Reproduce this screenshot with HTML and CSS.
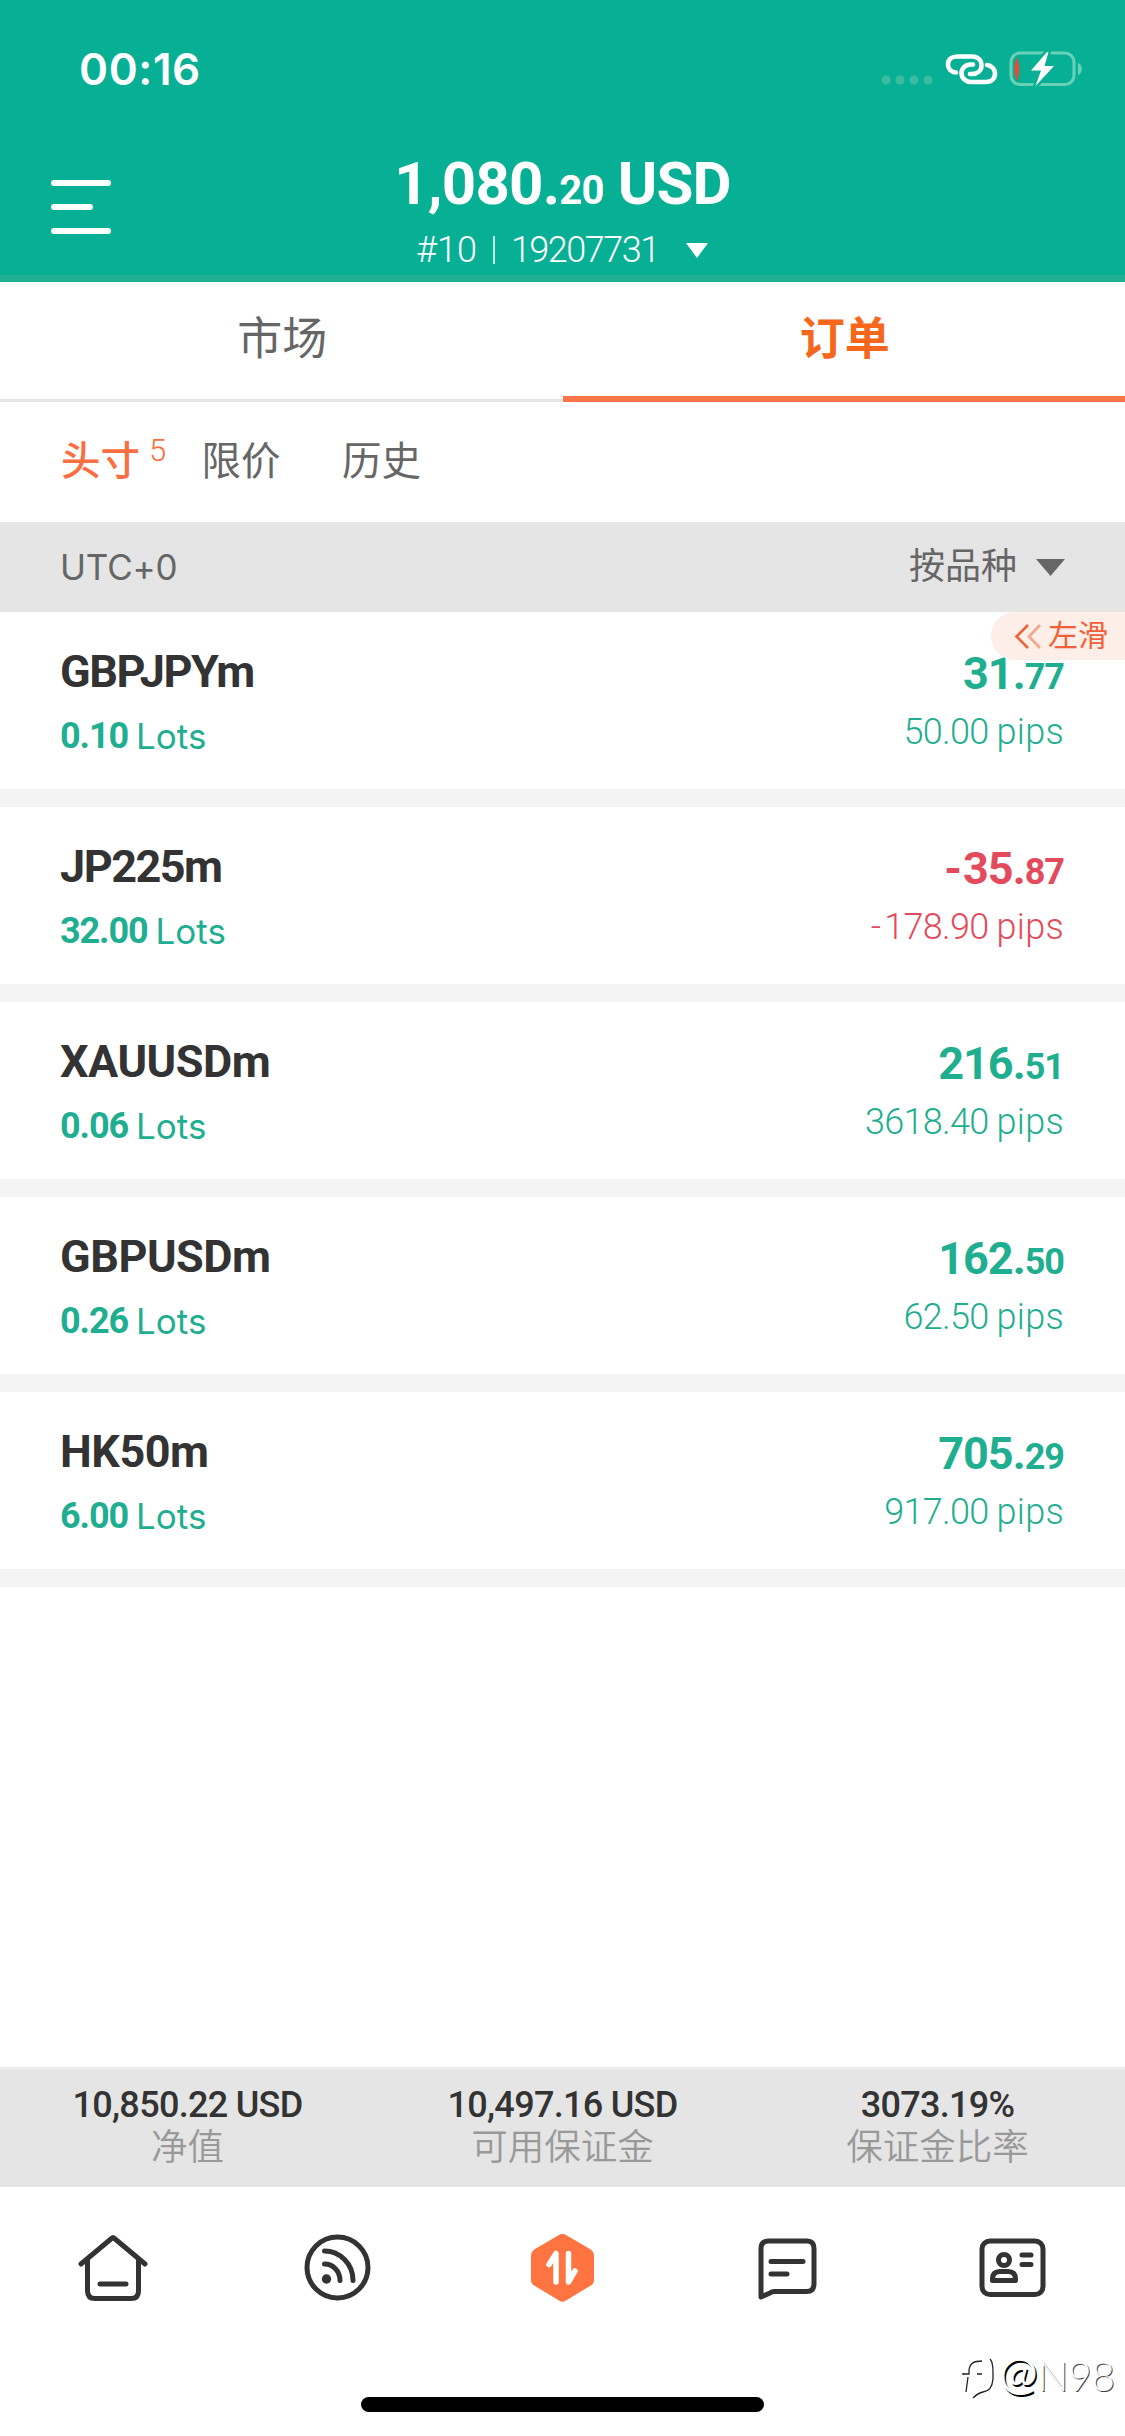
FILE: index.html
```html
<!DOCTYPE html>
<html lang="zh-CN">
<head>
<meta charset="utf-8">
<title>订单</title>
<link rel="stylesheet" href="styles.css">
</head>
<body>
<header class="header">
  <div class="status">
    <span class="time">00:16</span>
    <svg class="status-icons" width="204" height="40" viewBox="0 0 204 40">
      <g fill="#3cbb9f"><circle cx="6" cy="26" r="4.6"/><circle cx="20" cy="26" r="4.6"/><circle cx="34" cy="26" r="4.6"/><circle cx="48" cy="26" r="4.6"/></g>
      <g fill="none" stroke="#fff" stroke-width="4.6" stroke-linecap="round">
        <path d="M76 18.500C71 18 68 14.500 68 10.500C68 5.500 72 2.500 77 2.500H92C98 2.500 101.500 6.500 101.500 11.500C101.500 17 97 20 92 20H90"/>
        <path d="M93 10.500H91C85 10.500 81.500 14.500 81.500 19C81.500 24.500 86 28 91 28H106C111.500 28 115 24.500 115 19.500C115 15 111.500 11.500 107 11"/>
      </g>
      <rect x="131" y="-1" width="63" height="31.500" rx="9" fill="none" stroke="#68d1b8" stroke-width="3"/>
      <path d="M198 9C203 10 203 20 198 21Z" fill="#68d1b8"/>
      <path d="M137 5Q133 15 137 25Q140 15 137 5Z" fill="#e64b35" stroke="#e64b35" stroke-width="1.500"/>
      <path d="M167-2L151 16.500H161L155.500 32L174 12H164.500L168.500-2Z" fill="#fff" stroke="#07b094" stroke-width="5" paint-order="stroke" stroke-linejoin="round"/>
    </svg>
  </div>
  <div class="account">
    <svg class="menu" width="60" height="54" viewBox="0 0 60 54" stroke="#fff" stroke-width="6" stroke-linecap="round"><path d="M3 3H57M3 27H39M3 51H57"/></svg>
    <div class="balance">1,080.<small>20</small> USD</div>
    <div class="account-id"><span>#10</span><i class="divider"></i><span class="number">19207731</span><svg width="22" height="15" viewBox="0 0 22 15"><path d="M0 0H22L11 15Z" fill="#fff"/></svg></div>
  </div>
</header>
<nav class="tabs">
  <div class="tab">市场</div>
  <div class="tab tab-active">订单</div>
</nav>
<nav class="subtabs">
  <span class="subtab subtab-active">头寸<sup>5</sup></span>
  <span class="subtab">限价</span>
  <span class="subtab">历史</span>
</nav>
<div class="sortbar">
  <span class="utc">UTC+0</span>
  <span class="sort">按品种<svg width="29" height="17" viewBox="0 0 29 17"><path d="M0 0H29L14.500 17Z" fill="#666"/></svg></span>
</div>
<main class="orders">
  <section class="order">
    <div class="left"><div class="symbol tight">GBPJPYm</div><div class="lots"><b>0.10</b><span>Lots</span></div></div>
    <div class="right"><div class="profit">31.<small>77</small></div><div class="pips">50.00 <span>pips</span></div></div>
    <div class="swipe"><svg width="27" height="25" viewBox="0 0 27 25" fill="none" stroke-width="2.600"><path d="M26 1L15 12.500L26 24" stroke="#f7a58c"/><path d="M14 1L2.500 12.500L14 24" stroke="#f2603a"/></svg>左滑</div>
  </section>
  <section class="order loss">
    <div class="left"><div class="symbol tight">JP225m</div><div class="lots"><b>32.00</b><span>Lots</span></div></div>
    <div class="right"><div class="profit"><span class="minus">-</span>35.<small>87</small></div><div class="pips"><span class="minus">-</span>178.90 <span>pips</span></div></div>
  </section>
  <section class="order">
    <div class="left"><div class="symbol">XAUUSDm</div><div class="lots"><b>0.06</b><span>Lots</span></div></div>
    <div class="right"><div class="profit">216.<small>51</small></div><div class="pips">3618.40 <span>pips</span></div></div>
  </section>
  <section class="order">
    <div class="left"><div class="symbol">GBPUSDm</div><div class="lots"><b>0.26</b><span>Lots</span></div></div>
    <div class="right"><div class="profit">162.<small>50</small></div><div class="pips">62.50 <span>pips</span></div></div>
  </section>
  <section class="order">
    <div class="left"><div class="symbol">HK50m</div><div class="lots"><b>6.00</b><span>Lots</span></div></div>
    <div class="right"><div class="profit">705.<small>29</small></div><div class="pips">917.00 <span>pips</span></div></div>
  </section>
</main>
<section class="summary">
  <div><div class="value">10,850.22 USD</div><div class="label">净值</div></div>
  <div><div class="value">10,497.16 USD</div><div class="label">可用保证金</div></div>
  <div><div class="value">3073.19%</div><div class="label">保证金比率</div></div>
</section>
<footer class="bottom">
  <nav class="nav">
    <svg width="76" height="76" viewBox="0 0 76 76"><path d="M6 31L36.500 5.500Q38 4 39.500 5.500L70 31M12.500 27V58Q12.500 65.500 20 65.500H56Q63.500 65.500 63.500 58V27M25 51H51"/></svg>
    <svg width="76" height="76" viewBox="0 0 76 76"><circle cx="37.500" cy="34.500" r="30.500"/><path d="M24.500 18C40 18 53 31 53 47.500M24.500 31C33 31 40 38 40 47.500"/><circle cx="26.500" cy="46" r="4.700" class="solid"/></svg>
    <svg width="76" height="76" viewBox="0 0 76 76"><path d="M34 2Q37.500 0 41 2L65 16Q69 18.500 69 23V47Q69 51 65 53L41 67.500Q37.500 70 34 67.500L10 53Q6 51 6 47V23Q6 18.500 10 16Z" class="accent"/><path d="M24 31.500L31 20.500V49M43.500 20.500V49L50 38" class="arrows"/></svg>
    <svg width="76" height="76" viewBox="0 0 76 76"><path d="M11 64V15.500Q11 8 18.500 8H57Q64 8 64 15.500V50.500Q64 58.500 57 58.500H24Q22 58.500 20 60ZM21 28.500H53M21 41H37" /></svg>
    <svg width="76" height="76" viewBox="0 0 76 76"><rect x="7" y="8" width="61" height="53.500" rx="8"/><circle cx="29" cy="27" r="5.500"/><path d="M17.500 47.500V46Q17.500 38.500 25 38.500H33Q40.500 38.500 40.500 46V47.500ZM47 22H56M47 31.500H56"/></svg>
  </nav>
  <div class="home-indicator"></div>
  <div class="watermark"><svg width="40" height="46" viewBox="0 0 40 46"><path d="M5 17H11V13C12 6 16 4 24 4M10 20L8 35M5 16V18M32 2Q35 5 35 15V22Q34 34 25 35Q20 36 15 41M19 17H24"/></svg><span class="at">@</span><span class="name">N98</span></div>
</footer>
</body>
</html>
```
FILE: styles.css
```css
* { box-sizing: border-box; }
body {
  margin: 0;
  width: 1125px;
  height: 2436px;
  display: flex;
  flex-direction: column;
  overflow: hidden;
  background: #fff;
  color: #333;
  font-family: Roboto, "Noto Sans CJK SC", sans-serif;
}
svg { display: block; overflow: visible; flex: none; }

.header { height: 282px; background: #07b094; color: #fff; border-bottom: 7px solid #22ae91; flex: none; }
.status { height: 138px; padding: 0 41px 0 79px; display: flex; justify-content: space-between; align-items: center; }
.time { font: 600 44px/60px Inter, sans-serif; letter-spacing: 0.6px; }
.status-icons { margin-top: 10px; }
.account { height: 144px; display: grid; grid-template-columns: 60px 1fr 60px; padding: 9px 51px 0; grid-template-rows: 72px 66px; }
.menu { grid-row: 1 / 3; margin-top: 33px; }
.balance { grid-column: 2; text-align: center; font-weight: 700; font-size: 60px; line-height: 74px; white-space: nowrap; letter-spacing: -0.8px; }
.balance small { font-size: 40px; font-weight: 700; }
.account-id { grid-column: 2; display: flex; align-items: center; height: 62px; padding-left: 305px; font-size: 36px; font-weight: 350; }
.divider { width: 2px; height: 28px; margin: 0 16px; background: #c5ece4; }
.number { letter-spacing: -1.5px; margin-right: 27px; }

.tabs { display: flex; height: 120px; flex: none; }
.tab { flex: 1; padding-left: 2px; text-align: center; font-size: 45px; line-height: 116px; color: #666; border-bottom: 3px solid #e5e5e5; }
.tab-active { color: #f7671b; font-weight: 700; border-bottom: 6px solid #f97446; }

.subtabs { display: flex; height: 120px; padding: 0 61px; flex: none; font-size: 39.500px; line-height: 120px; color: #666; }
.subtab { width: 140.500px; }
.subtab-active { color: #fa6e41; font-weight: 500; display: flex; }
.subtab-active sup { font-size: 31px; font-weight: 350; line-height: 98px; margin-left: 9px; }

.sortbar { height: 90px; padding: 0 60px 0 60px; display: flex; justify-content: space-between; align-items: center; background: #e5e5e5; color: #666; flex: none; }
.utc { font: 400 35px/50px Inter, sans-serif; letter-spacing: -0.2px; }
.sort { display: flex; align-items: center; gap: 19px; font-size: 36px; line-height: 90px; }
.sort svg { margin-top: 0; }

.orders { flex: 1; }
.order { position: relative; height: 195px; padding: 35px 60px 0; display: flex; justify-content: space-between; border-bottom: 18px solid #f4f4f4; color: #1fae8f; }
.symbol { font-size: 45px; font-weight: 700; line-height: 50px; color: #333; letter-spacing: -0.5px; }
.symbol.tight { letter-spacing: -1.5px; }
.lots { font: 400 35px/50px Inter, sans-serif; margin-top: 14px; display: flex; gap: 8px; }
.lots b { font: 700 36px/50px Roboto, sans-serif; letter-spacing: -1.1px; }
.right { text-align: right; padding: 2px 1px 0 0; }
.profit { font-size: 45px; font-weight: 700; line-height: 50px; letter-spacing: -1px; }
.profit small { font-size: 36px; }
.pips { font-size: 36px; font-weight: 350; line-height: 50px; margin-top: 5px; letter-spacing: -0.7px; }
.pips span { letter-spacing: 0.3px; }
.profit .minus { letter-spacing: 1px; }
.pips .minus { letter-spacing: 3px; }
.loss .right { color: #e34b5d; }
.swipe { position: absolute; right: 0; top: 0; width: 134px; height: 48px; padding-left: 23px; display: flex; align-items: center; gap: 7px; border-radius: 24px 0 0 24px; background: #fdeee8; color: #f2603a; font-size: 30px; line-height: 48px; }

.summary { height: 120px; display: flex; padding-top: 12px; background: #e5e5e5; border-top: 3px solid #ebebeb; text-align: center; flex: none; }
.summary > div { flex: 1; }
.value { font-size: 36px; font-weight: 500; line-height: 46px; letter-spacing: -0.7px; }
.label { font-size: 36.500px; font-weight: 350; line-height: 40px; color: #999; }

.bottom { position: relative; height: 249px; flex: none; }
.nav { display: grid; grid-template-columns: repeat(5, 1fr); justify-items: center; padding-top: 46px; }
.nav svg { fill: none; stroke: #333; stroke-width: 5; stroke-linecap: round; stroke-linejoin: round; }
.nav .solid { fill: #333; stroke: none; }
.nav .accent { fill: #ff7440; stroke: none; }
.nav .arrows { stroke: #fff; stroke-width: 5.500; }
.home-indicator { width: 403px; height: 15px; margin: 88px auto 0; border-radius: 8px; background: #000; }
.watermark { position: absolute; left: 958px; top: 170px; display: flex; color: #fff; font: 400 41px/38px Lato, sans-serif; }
.watermark svg { fill: none; stroke: #222; stroke-width: 1.300; margin-right: 1px; }
.watermark .at { font-size: 46px; line-height: 30px; text-shadow: 1.500px 1.500px 0 #000; }
.watermark .name { font-weight: 300; letter-spacing: -0.5px; text-shadow: 1px 1px 0.500px #444; }
```
